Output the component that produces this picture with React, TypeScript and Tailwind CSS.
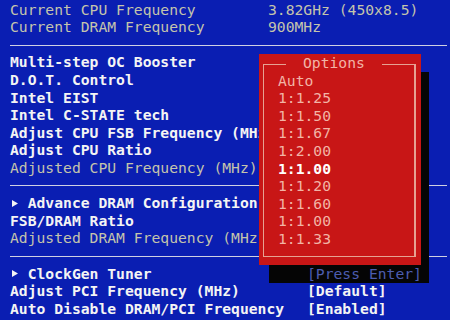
import React from "react";

type Tone = "white" | "gray";

interface Row {
    kind: "item" | "line";
    label?: string;
    sub?: boolean;
    tone?: Tone;
    value?: string;
    valueTone?: "gray" | "white" | "dim";
    near?: boolean;
}

const rows: Row[] = [
    { kind: "item", label: "Current CPU Frequency", tone: "gray", value: "3.82GHz (450x8.5)", valueTone: "gray", near: true },
    { kind: "item", label: "Current DRAM Frequency", tone: "gray", value: "900MHz", valueTone: "gray", near: true },
    { kind: "line" },
    { kind: "item", label: "Multi-step OC Booster", tone: "white" },
    { kind: "item", label: "D.O.T. Control", tone: "white" },
    { kind: "item", label: "Intel EIST", tone: "white" },
    { kind: "item", label: "Intel C-STATE tech", tone: "white" },
    { kind: "item", label: "Adjust CPU FSB Frequency (MHz)", tone: "white" },
    { kind: "item", label: "Adjust CPU Ratio", tone: "white" },
    { kind: "item", label: "Adjusted CPU Frequency (MHz)", tone: "gray" },
    { kind: "line" },
    { kind: "item", label: "Advance DRAM Configuration", tone: "white", sub: true },
    { kind: "item", label: "FSB/DRAM Ratio", tone: "white" },
    { kind: "item", label: "Adjusted DRAM Frequency (MHz)", tone: "gray" },
    { kind: "line" },
    { kind: "item", label: "ClockGen Tuner", tone: "white", sub: true, value: "[Press Enter]", valueTone: "dim" },
    { kind: "item", label: "Adjust PCI Frequency (MHz)", tone: "white", value: "[Default]", valueTone: "white" },
    { kind: "item", label: "Auto Disable DRAM/PCI Frequency", tone: "white", value: "[Enabled]", valueTone: "white" },
];

const options = ["Auto", "1:1.25", "1:1.50", "1:1.67", "1:2.00", "1:1.00", "1:1.20", "1:1.60", "1:1.00", "1:1.33"];
const selected = 5;

const toneClass = (tone?: string) => {
    if (tone === "gray") return "text-[#c4c4ac] font-normal";
    if (tone === "dim") return "text-[#4d5db0] font-normal relative z-20";
    return "text-[#f4f4f4] font-bold";
};

const Arrow = () => (
    <span className="inline-flex w-[17.7px] items-center">
        <svg width="8" height="9" viewBox="0 0 8 9" className="ml-[2px]">
            <polygon points="0,1 6,4.5 0,8" fill="#f4f4f4" />
        </svg>
    </span>
);

const Options = () => (
    <>
        {/* drop shadow under the popup */}
        <div className="absolute left-[269px] top-[72px] w-[160px] h-[211px] bg-[#050505] z-10" />
        <div className="absolute left-[259px] top-[54px] w-[162px] h-[211px] bg-[#c81616] z-10 pt-[0.6px]">
            <div className="absolute left-[4px] top-[10px] right-[5px] bottom-[8px] border border-[#e6a292] border-r-2" />
            <div className="h-[17.6px] flex items-center">
                <span className="relative ml-[27px] px-[17px] bg-[#c81616] text-[#f2b4a6] leading-none">
                    Options
                </span>
            </div>
            <div className="relative pl-[19px]">
                {options.map((opt, i) => (
                    <div key={i} className="h-[17.6px] flex items-center">
                        <span className={i === selected ? "text-white font-bold" : "text-[#f2b4a6]"}>{opt}</span>
                    </div>
                ))}
            </div>
        </div>
    </>
);

export default function App() {
    return (
        <div className="relative w-[450px] h-[320px] overflow-hidden bg-[#0a1eb2] font-['DejaVu_Sans_Mono','Liberation_Mono',monospace] text-[14.7px] leading-none whitespace-pre">
            <div className="pl-[10px] pt-[1.2px]">
                {rows.map((row, i) =>
                    row.kind === "line" ? (
                        <div key={i} className="h-[17.6px] flex items-center pr-[3px]">
                            <div className="h-px w-full bg-[#cfd0e2]" />
                        </div>
                    ) : (
                        <div key={i} className="h-[17.6px] flex items-center">
                            <span className={`${row.near ? "w-[258px]" : "w-[297px]"} shrink-0 flex items-center ${toneClass(row.tone)}`}>
                                {row.sub && <Arrow />}
                                {row.label}
                            </span>
                            {row.value && <span className={toneClass(row.valueTone)}>{row.value}</span>}
                        </div>
                    )
                )}
            </div>
            <Options />
        </div>
    );
}
